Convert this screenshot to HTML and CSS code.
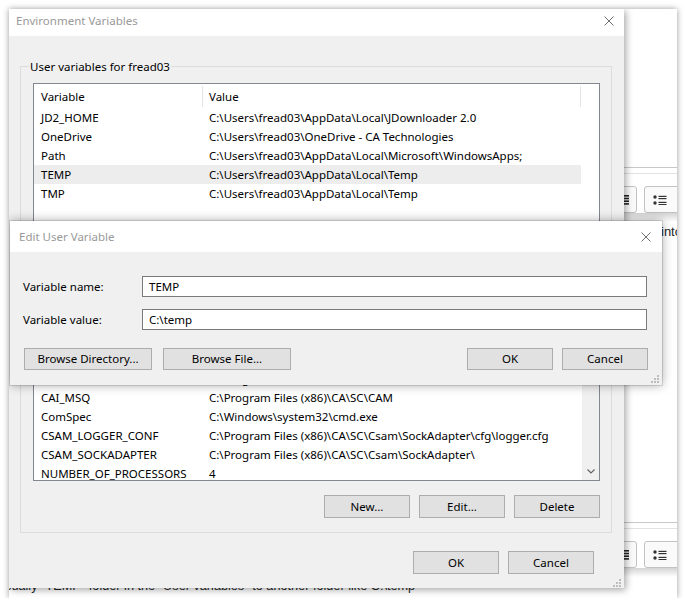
FILE: index.html
```
<!DOCTYPE html>
<html>
<head>
<meta charset="utf-8">
<title>Environment Variables</title>
<link rel="stylesheet" href="styles.css">
</head>
<body>
<div class="shot">
  <div class="bgpage">
    <div class="toolbar">
      <div class="tbinner">
        <div class="tbtn tj">
          <svg width="12" height="10" viewBox="0 0 12 10"><rect x="0" y="0" width="12" height="1.6" fill="#222"/><rect x="0" y="2.7" width="12" height="1.6" fill="#222"/><rect x="0" y="5.4" width="12" height="1.6" fill="#222"/><rect x="0" y="8.1" width="12" height="1.6" fill="#222"/></svg>
        </div>
        <div class="tbtn tl">
          <svg width="14" height="10" viewBox="0 0 14 10"><circle cx="2" cy="2" r="1.7" fill="#333"/><circle cx="2" cy="8" r="1.7" fill="#333"/><rect x="5.5" y="0.8" width="8" height="1.2" fill="#333"/><rect x="5.5" y="3" width="8" height="1.2" fill="#333"/><rect x="5.5" y="6.8" width="8" height="1.2" fill="#333"/><rect x="5.5" y="9" width="8" height="1" fill="#333"/></svg>
        </div>
      </div>
      <div class="tbshade"></div>
    </div>
    <p class="bgline1">into the</p>
    <div class="toolbar tb2">
      <div class="tbinner">
        <div class="tbtn tj">
          <svg width="12" height="10" viewBox="0 0 12 10"><rect x="0" y="0" width="12" height="1.6" fill="#222"/><rect x="0" y="2.7" width="12" height="1.6" fill="#222"/><rect x="0" y="5.4" width="12" height="1.6" fill="#222"/><rect x="0" y="8.1" width="12" height="1.6" fill="#222"/></svg>
        </div>
        <div class="tbtn tl">
          <svg width="14" height="10" viewBox="0 0 14 10"><circle cx="2" cy="2" r="1.7" fill="#333"/><circle cx="2" cy="8" r="1.7" fill="#333"/><rect x="5.5" y="0.8" width="8" height="1.2" fill="#333"/><rect x="5.5" y="3" width="8" height="1.2" fill="#333"/><rect x="5.5" y="6.8" width="8" height="1.2" fill="#333"/><rect x="5.5" y="9" width="8" height="1" fill="#333"/></svg>
        </div>
      </div>
      <div class="tbshade"></div>
    </div>
    <p class="bgline2">usually "TEMP" folder in the "User variables" to another folder like C:\temp</p>
  </div>

  <div class="dlg env">
    <div class="tbar env-tbar">
      <span class="ttl">Environment Variables</span>
      <span class="xb"><svg width="10" height="10" viewBox="0 0 10 10"><path d="M0.5 0.5L9.5 9.5M9.5 0.5L0.5 9.5" stroke="#6e6e6e" stroke-width="1" fill="none"/></svg></span>
    </div>
    <div class="envbody">
      <div class="group">
        <div class="gtitle"><span>User variables for fread03</span></div>
        <div class="gbody gb-user">
          <div class="lv lv-user">
            <div class="lvhead"><div class="hc c1">Variable</div><div class="hc c2">Value</div></div>
            <div class="lvrow"><div class="c1">JD2_HOME</div><div class="c2">C:\Users\fread03\AppData\Local\JDownloader 2.0</div></div>
            <div class="lvrow"><div class="c1">OneDrive</div><div class="c2">C:\Users\fread03\OneDrive - CA Technologies</div></div>
            <div class="lvrow"><div class="c1">Path</div><div class="c2">C:\Users\fread03\AppData\Local\Microsoft\WindowsApps;</div></div>
            <div class="lvrow sel"><div class="c1">TEMP</div><div class="c2">C:\Users\fread03\AppData\Local\Temp</div></div>
            <div class="lvrow"><div class="c1">TMP</div><div class="c2">C:\Users\fread03\AppData\Local\Temp</div></div>
          </div>
          <div class="btnrow">
            <button class="btn">New...</button>
            <button class="btn">Edit...</button>
            <button class="btn">Delete</button>
          </div>
        </div>
      </div>
      <div class="group g-sys">
        <div class="gtitle"></div>
        <div class="gbody gb-sys">
          <div class="lv lv-sys">
            <div class="lvmain">
              <div class="lvhead"><div class="hc c1"></div><div class="hc c2"></div></div>
              <div class="lvrow"></div>
              <div class="lvrow"><div class="c1">CAI_CAFT</div><div class="c2">C:\Program Files (x86)\CA\SC\CAFT\</div></div>
              <div class="lvrow"><div class="c1">CAI_MSQ</div><div class="c2">C:\Program Files (x86)\CA\SC\CAM</div></div>
              <div class="lvrow"><div class="c1">ComSpec</div><div class="c2">C:\Windows\system32\cmd.exe</div></div>
              <div class="lvrow"><div class="c1">CSAM_LOGGER_CONF</div><div class="c2">C:\Program Files (x86)\CA\SC\Csam\SockAdapter\cfg\logger.cfg</div></div>
              <div class="lvrow"><div class="c1">CSAM_SOCKADAPTER</div><div class="c2">C:\Program Files (x86)\CA\SC\Csam\SockAdapter\</div></div>
              <div class="lvrow"><div class="c1">NUMBER_OF_PROCESSORS</div><div class="c2">4</div></div>
            </div>
            <div class="sb">
              <div class="sbdown"><svg width="8" height="5" viewBox="0 0 8 5"><path d="M0.5 0.5L4 4L7.5 0.5" stroke="#606060" stroke-width="1.1" fill="none"/></svg></div>
            </div>
          </div>
          <div class="btnrow">
            <button class="btn">New...</button>
            <button class="btn">Edit...</button>
            <button class="btn">Delete</button>
          </div>
        </div>
      </div>
      <div class="btnrow dlgbtns">
        <button class="btn">OK</button>
        <button class="btn">Cancel</button>
      </div>
    </div>
    <svg class="grip env-grip" width="8" height="8" viewBox="0 0 8 8"><rect x="6" y="0" width="2" height="2"/><rect x="3" y="3" width="2" height="2"/><rect x="6" y="3" width="2" height="2"/><rect x="0" y="6" width="2" height="2"/><rect x="3" y="6" width="2" height="2"/><rect x="6" y="6" width="2" height="2"/></svg>
  </div>

  <div class="dlg edit">
    <div class="tbar edit-tbar">
      <span class="ttl">Edit User Variable</span>
      <span class="xb"><svg width="10" height="10" viewBox="0 0 10 10"><path d="M0.5 0.5L9.5 9.5M9.5 0.5L0.5 9.5" stroke="#6e6e6e" stroke-width="1" fill="none"/></svg></span>
    </div>
    <div class="editbody">
      <div class="field"><span class="lbl">Variable name:</span><div class="input">TEMP</div></div>
      <div class="field"><span class="lbl">Variable value:</span><div class="input">C:\temp</div></div>
      <div class="ebtns">
        <button class="btn bwide">Browse Directory...</button>
        <button class="btn bwide">Browse File...</button>
        <span class="spacer"></span>
        <button class="btn">OK</button>
        <button class="btn">Cancel</button>
      </div>
    </div>
    <svg class="grip edit-grip" width="8" height="8" viewBox="0 0 8 8"><rect x="6" y="0" width="2" height="2"/><rect x="3" y="3" width="2" height="2"/><rect x="6" y="3" width="2" height="2"/><rect x="0" y="6" width="2" height="2"/><rect x="3" y="6" width="2" height="2"/><rect x="6" y="6" width="2" height="2"/></svg>
  </div>
</div>
</body>
</html>
```
FILE: styles.css
```
* { box-sizing: border-box; }

body {
  margin: 0;
  background: #fff;
  font-family: "Noto Sans", "Open Sans", sans-serif;
  font-size: 11.5px;
  color: #000;
}

.shot {
  position: relative;
  margin: 9px 0 0 9px;
  width: 668px;
  height: 589px;
  background: #fff;
  overflow: hidden;
  box-shadow: 0 0 6px rgba(0, 0, 0, 0.4);
}

/* background web page */
.bgpage {
  padding-top: 158px;
  font-family: "Liberation Sans", Arial, sans-serif;
  font-size: 13px;
  color: #242729;
}
.toolbar {
  border-top: 1px solid #c8c8c8;
  padding-top: 5px;
}
.tb2 { margin-top: 282px; }
.tbinner {
  border-top: 1px solid #e2e2e2;
  padding: 12px 0 0 596px;
  display: flex;
  gap: 7px;
}
.tbtn {
  flex: none;
  width: 32px;
  height: 27px;
  border: 1px solid #c2c2c2;
  border-radius: 3px;
  background: #fafafa;
  display: flex;
  align-items: center;
}
.tbtn.tj { justify-content: flex-end; padding-right: 7px; }
.tbtn.tl { width: 40px; padding-left: 8px; }
.tbshade {
  height: 9px;
  background: linear-gradient(#d4d4d4, #fff);
}
.bgline1 {
  margin: 2px 0 0;
  padding-left: 652px;
  line-height: 16px;
  white-space: nowrap;
}
.bgline2 {
  margin: 2px 0 0;
  line-height: 15px;
  font-size: 12.7px;
  text-indent: -11px;
  white-space: nowrap;
}

/* dialogs */
.dlg {
  position: absolute;
  background: #f0f0f0;
  display: flex;
  flex-direction: column;
}
.env {
  left: 0;
  top: 0;
  width: 615px;
  height: 579px;
  box-shadow: 2px 2px 7px rgba(0, 0, 0, 0.35);
}
.edit {
  left: 1px;
  top: 212px;
  width: 652px;
  height: 164px;
  box-shadow: 0 0 0 1px rgba(0, 0, 0, 0.12), 0 0 10px rgba(0, 0, 0, 0.35);
}
.tbar {
  background: #fff;
  display: flex;
  justify-content: space-between;
  align-items: flex-start;
  flex: none;
}
.env-tbar { height: 27px; padding: 4px 10px 0 7px; }
.edit-tbar { height: 31px; padding: 8px 11px 0 9px; }
.ttl {
  color: #999;
  line-height: 16px;
  white-space: nowrap;
}
.xb {
  height: 16px;
  display: flex;
  align-items: center;
}

.envbody { padding: 23px 12px 0 11px; }

.group + .group { margin-top: 10px; }
.gtitle {
  display: flex;
  height: 16px;
  line-height: 16px;
  white-space: nowrap;
}
.gtitle::before,
.gtitle::after {
  content: "";
  height: 8px;
  align-self: flex-end;
  border-top: 1px solid #dcdcdc;
}
.gtitle::before { width: 8px; border-left: 1px solid #dcdcdc; }
.gtitle::after { flex: 1; border-right: 1px solid #dcdcdc; }
.gtitle span { padding: 0 1px; }
.gbody {
  border: 1px solid #dcdcdc;
  border-top: 0;
  padding: 8px 11px 13px 12px;
}
.gb-sys { padding-bottom: 14px; }

.lv {
  border: 1px solid #828790;
  background: #fff;
  overflow: hidden;
}
.lv-user { height: 158px; }
.lv-sys { height: 156px; display: flex; }
.lvmain { width: 548px; flex: none; overflow: hidden; }
.lvhead { display: flex; height: 24px; }
.hc {
  height: 21px;
  margin-top: 2px;
  line-height: 21px;
  border-right: 1px solid #e5e5e5;
}
.lvrow {
  display: flex;
  width: 547px;
  height: 19px;
  line-height: 18px;
  padding-top: 1px;
}
.lvrow.sel { background: #ededed; }
.c1 {
  flex: none;
  width: 169px;
  padding-left: 7px;
  white-space: nowrap;
  overflow: hidden;
}
.c2 {
  flex: none;
  width: 378px;
  padding-left: 6px;
  white-space: nowrap;
  overflow: hidden;
}
.sb {
  width: 17px;
  flex: none;
  background: #f0f0f0;
  display: flex;
  flex-direction: column;
  justify-content: flex-end;
}
.sbdown {
  height: 17px;
  display: flex;
  align-items: center;
  justify-content: center;
}

.btnrow {
  display: flex;
  justify-content: flex-end;
  gap: 9px;
  margin-top: 13px;
}
.gb-sys .btnrow { margin-top: 14px; }
.dlgbtns { margin-top: 18px; margin-right: 18px; }

.btn {
  flex: none;
  width: 86px;
  height: 23px;
  padding: 0;
  margin: 0;
  background: #e1e1e1;
  border: 1px solid #adadad;
  border-radius: 0;
  font-family: inherit;
  font-size: 11.5px;
  color: #000;
  line-height: 20px;
}

.editbody { padding: 24px 14px 15px 13px; }
.field {
  display: grid;
  grid-template-columns: 119px 1fr;
  align-items: center;
}
.field + .field { margin-top: 12px; }
.lbl { white-space: nowrap; }
.input {
  height: 21px;
  margin-right: 1px;
  background: #fff;
  border: 1px solid #7a7a7a;
  padding-left: 6px;
  line-height: 19px;
}
.ebtns {
  display: flex;
  gap: 9px;
  margin-top: 18px;
  margin-left: 1px;
}
.ebtns .btn { height: 22px; }
.bwide { width: 128px; }
.bwide + .bwide { margin-left: 2px; }
.spacer { flex: 1; }

.grip {
  position: absolute;
  fill: #bdbdbd;
}
.env-grip { right: 3px; bottom: 1px; }
.edit-grip { right: 3px; bottom: 2px; }
```
